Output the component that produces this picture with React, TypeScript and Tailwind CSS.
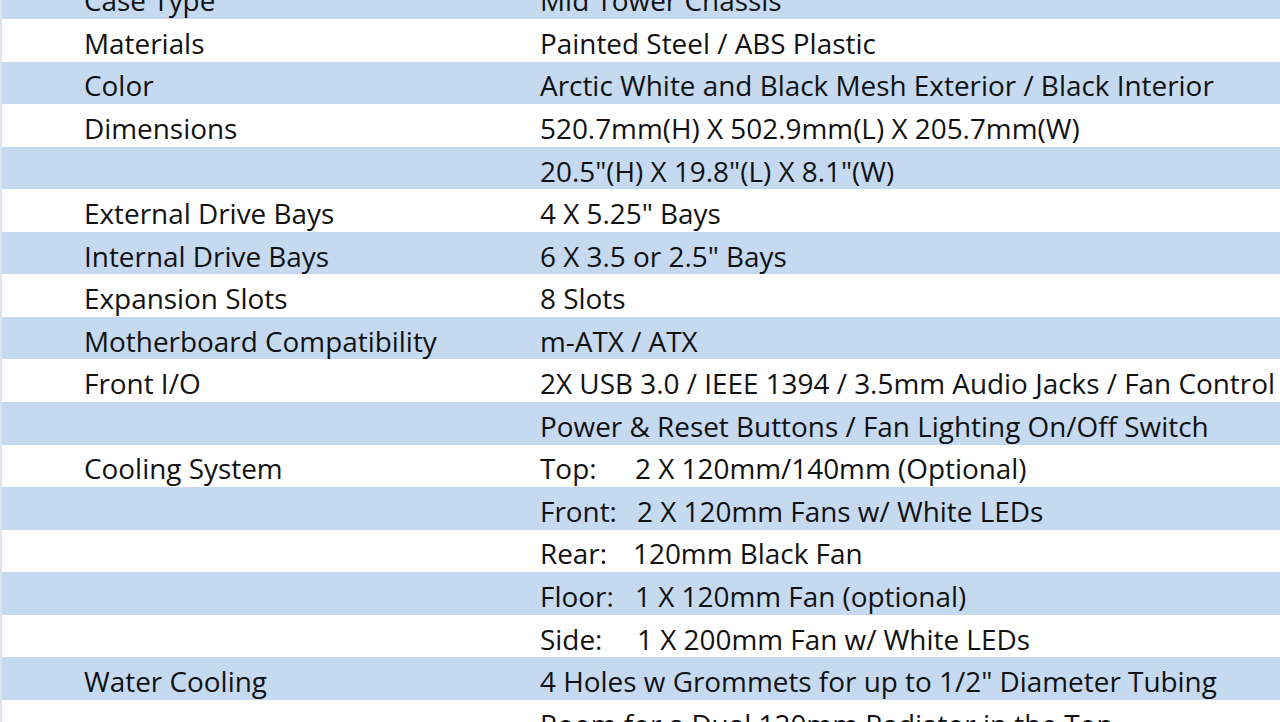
import React from 'react';

type Row = { label?: string; value: string; tab?: string };

const rows: Row[] = [
  { label: 'Case Type', value: 'Mid Tower Chassis' },
  { label: 'Materials', value: 'Painted Steel / ABS Plastic' },
  { label: 'Color', value: 'Arctic White and Black Mesh Exterior / Black Interior' },
  { label: 'Dimensions', value: '520.7mm(H) X 502.9mm(L) X 205.7mm(W)' },
  { value: '20.5"(H) X 19.8"(L) X 8.1"(W)' },
  { label: 'External Drive Bays', value: '4 X 5.25" Bays' },
  { label: 'Internal Drive Bays', value: '6 X 3.5 or 2.5" Bays' },
  { label: 'Expansion Slots', value: '8 Slots' },
  { label: 'Motherboard Compatibility', value: 'm-ATX / ATX' },
  { label: 'Front I/O', value: '2X USB 3.0 / IEEE 1394 / 3.5mm Audio Jacks / Fan Control' },
  { value: 'Power & Reset Buttons / Fan Lighting On/Off Switch' },
  { label: 'Cooling System', tab: 'Top:', value: '2 X 120mm/140mm (Optional)' },
  { tab: 'Front:', value: '2 X 120mm Fans w/ White LEDs' },
  { tab: 'Rear:', value: '120mm Black Fan' },
  { tab: 'Floor:', value: '1 X 120mm Fan (optional)' },
  { tab: 'Side:', value: '1 X 200mm Fan w/ White LEDs' },
  { label: 'Water Cooling', value: '4 Holes w Grommets for up to 1/2" Diameter Tubing' },
  { value: 'Room for a Dual 120mm Radiator in the Top' },
];

const App: React.FC = () => {
  return (
    <div className="h-[722px] w-[1280px] overflow-hidden bg-white">
      {/* spec sheet table */}
      <div
        className="mt-[-23.5px] border-l-2 border-[#dae3ee] text-[#111]"
        style={{ fontFamily: '"Open Sans", Lato, sans-serif' }}
      >
        {rows.map((r, i) => (
          <div
            key={i}
            className={`flex h-[42.56px] items-center pt-[7px] text-[27.9px] leading-none ${
              i % 2 === 0 ? 'bg-[#c5d9f1]' : 'bg-white'
            }`}
          >
            <div className="w-[538px] shrink-0 pl-[82px] whitespace-nowrap">{r.label ?? ''}</div>
            <div className="flex whitespace-nowrap">
              {r.tab && (
                <span
                  className={
                    r.tab === 'Top:' || r.tab === 'Floor:'
                      ? 'w-[95px]'
                      : r.tab === 'Rear:'
                        ? 'w-[93px]'
                        : 'w-[97px]'
                  }
                >
                  {r.tab}
                </span>
              )}
              <span>{r.value}</span>
            </div>
          </div>
        ))}
      </div>
    </div>
  );
};

export default App;
